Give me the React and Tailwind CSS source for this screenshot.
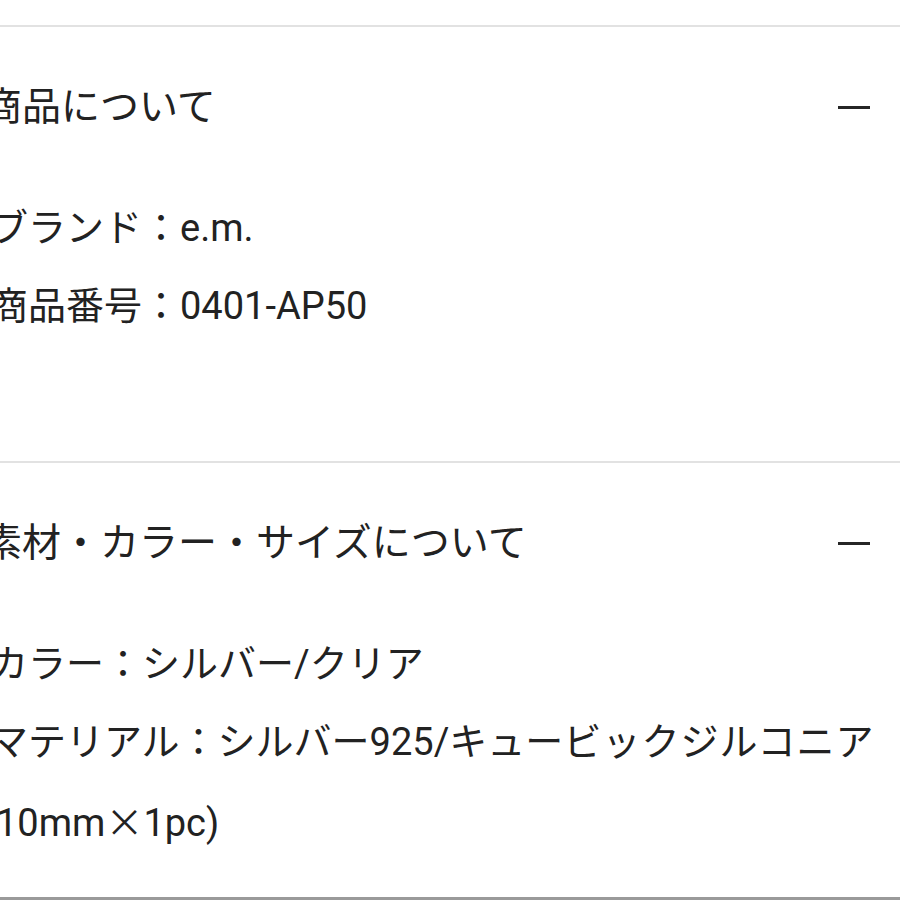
const FONT = { fontFamily: 'Roboto, "Noto Sans CJK JP", sans-serif' };

function Minus() {
  return <span className="block h-[3px] w-[32px] bg-[#262626]" />;
}

function Section({ title, children }) {
  return (
    <section className="flex flex-col">
      <div className="flex items-center justify-between pt-[40px] pr-[30px]">
        <h2 className="ml-[-17px] text-[39px] leading-[80px] font-normal text-[#222]">{title}</h2>
        <Minus />
      </div>
      <div className="ml-[-10px] mt-[42px] text-[38px] leading-[78px] text-[#222]">{children}</div>
    </section>
  );
}

export default function App() {
  return (
    <div className="w-[900px] h-[900px] overflow-hidden bg-white flex flex-col" style={FONT}>
      <div className="h-[25px]" />
      <div className="h-[2px] bg-[#e2e2e2]" />
      <div className="h-[434px]">
        <Section title="商品について">
          <p>ブランド：e.m.</p>
          <p>商品番号：0401-AP50</p>
        </Section>
      </div>
      <div className="h-[2px] bg-[#e2e2e2]" />
      <div className="h-[434px]">
        <Section title="素材・カラー・サイズについて">
          <p>カラー：シルバー/クリア</p>
          <p>
            マテリアル：シルバー925/キュー<span className="tracking-[1px]">ビックジルコニア</span>
          </p>
          <p className="ml-[-7px]">
            (10mm<span style={{ fontFamily: '"Noto Sans CJK JP", sans-serif' }}>×</span>1pc)
          </p>
        </Section>
      </div>
      <div className="h-[3px] bg-[#9a9a9a]" />
    </div>
  );
}
